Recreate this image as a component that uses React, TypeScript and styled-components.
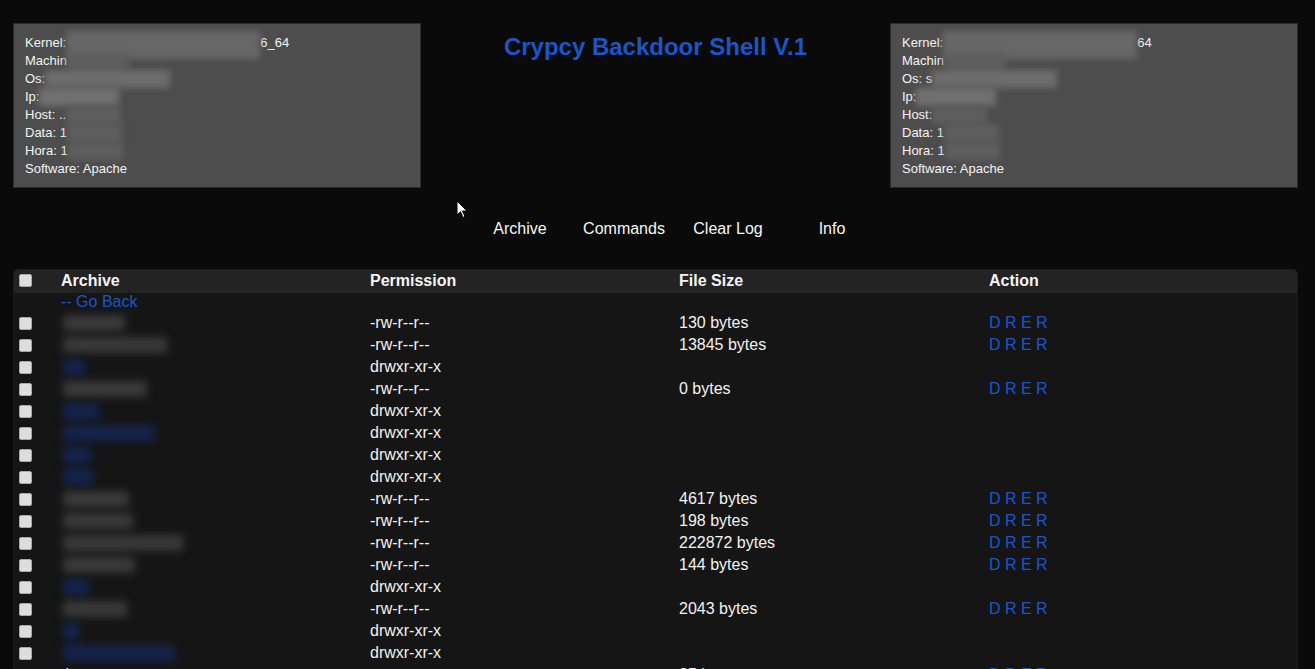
import React from 'react';
import styled, { createGlobalStyle } from 'styled-components';

const GlobalStyle = createGlobalStyle`
  html, body {
    margin: 0;
    padding: 0;
    background: #0a0a0a;
    font-family: "Liberation Sans", Arial, sans-serif;
    color: #f2f2f2;
    overflow: hidden;
  }
`;

interface Row {
  kind: 'file' | 'dir' | 'plain';
  w?: number;
  name?: string;
  perm: string;
  size?: string;
}

const rows: Row[] = [
  { kind: 'file', w: 62, perm: '-rw-r--r--', size: '130 bytes' },
  { kind: 'file', w: 104, perm: '-rw-r--r--', size: '13845 bytes' },
  { kind: 'dir', w: 22, perm: 'drwxr-xr-x' },
  { kind: 'file', w: 84, perm: '-rw-r--r--', size: '0 bytes' },
  { kind: 'dir', w: 36, perm: 'drwxr-xr-x' },
  { kind: 'dir', w: 92, perm: 'drwxr-xr-x' },
  { kind: 'dir', w: 28, perm: 'drwxr-xr-x' },
  { kind: 'dir', w: 30, perm: 'drwxr-xr-x' },
  { kind: 'file', w: 66, perm: '-rw-r--r--', size: '4617 bytes' },
  { kind: 'file', w: 70, perm: '-rw-r--r--', size: '198 bytes' },
  { kind: 'file', w: 120, perm: '-rw-r--r--', size: '222872 bytes' },
  { kind: 'file', w: 72, perm: '-rw-r--r--', size: '144 bytes' },
  { kind: 'dir', w: 26, perm: 'drwxr-xr-x' },
  { kind: 'file', w: 64, perm: '-rw-r--r--', size: '2043 bytes' },
  { kind: 'dir', w: 16, perm: 'drwxr-xr-x' },
  { kind: 'dir', w: 112, perm: 'drwxr-xr-x' },
  { kind: 'plain', name: '.htaccess', perm: '-rw-r--r--', size: '25 bytes' },
];

const InfoBox: React.FC<{ variant: 'left' | 'right' }> = ({ variant }) => (
  <Info>
    <Line>Kernel: <Redact $w={194} $h={28} $top $tone="#676767" />{variant === 'left' ? '6_64' : '64'}</Line>
    <Line>Machin<Redact $w={62} $h={18} /></Line>
    <Line>Os:{variant === 'right' ? ' s' : ''}<Redact $w={125} $h={18} $tone="#6c6c6c" /></Line>
    <Line>Ip:<Redact $w={80} $h={18} $tone="#707070" /></Line>
    <Line>Host:{variant === 'left' ? ' ..' : ''}<Redact $w={55} $h={18} /></Line>
    <Line>Data: 1<Redact $w={55} $h={18} /></Line>
    <Line>Hora: 1<Redact $w={55} $h={18} /></Line>
    <Line>Software: Apache</Line>
  </Info>
);

const Cursor = () => (
  <CursorMark width="12" height="19" viewBox="0 0 12 19">
    <path d="M1 1 L1 15 L4.5 11.8 L7 17.5 L9 16.6 L6.6 11 L11 11 Z" fill="#fff" stroke="#000" strokeWidth="1" />
  </CursorMark>
);

export default function App() {
  return (
    <Page>
      <GlobalStyle />
      <Cursor />
      <Header>
        <InfoBox variant="left" />
        <Title>Crypcy Backdoor Shell V.1</Title>
        <InfoBox variant="right" />
      </Header>

      <Nav>
        <NavItem>Archive</NavItem>
        <NavItem>Commands</NavItem>
        <NavItem>Clear Log</NavItem>
        <NavItem>Info</NavItem>
      </Nav>

      <Table>
        <HeadRow>
          <Cell><Check type="checkbox" /></Cell>
          <Cell>Archive</Cell>
          <Cell>Permission</Cell>
          <Cell>File Size</Cell>
          <Cell>Action</Cell>
        </HeadRow>
        <BackRow>
          <Cell />
          <Cell><BackLink>-- Go Back</BackLink></Cell>
        </BackRow>
        {rows.map((r, i) => (
          <BodyRow key={i}>
            <Cell><Check type="checkbox" /></Cell>
            <Cell>
              {r.kind === 'plain' ? (
                <Plain>{r.name}</Plain>
              ) : (
                <NameBlur $w={r.w || 40} $dir={r.kind === 'dir'} />
              )}
            </Cell>
            <Cell>{r.perm}</Cell>
            <Cell>{r.size}</Cell>
            <Cell>{r.size ? <Actions>D R E R</Actions> : null}</Cell>
          </BodyRow>
        ))}
      </Table>
    </Page>
  );
}

const Page = styled.div`
  position: relative;
  padding: 23px 17px 0 13px;
  height: 669px;
  box-sizing: border-box;
  overflow: hidden;
`;

const CursorMark = styled.svg`
  position: absolute;
  left: 456px;
  top: 200px;
  z-index: 2;
`;

const Header = styled.div`
  display: grid;
  grid-template-columns: 408px 1fr 408px;
  align-items: start;
`;

const Info = styled.div`
  background: #4e4d4e;
  border: 1px solid #2c2c2c;
  padding: 10px 11px 11px;
  height: 165px;
  box-sizing: border-box;
  overflow: hidden;
`;

const Line = styled.div`
  height: 18px;
  font-size: 13px;
  line-height: 18px;
  color: #f4f4f4;
  white-space: nowrap;
  display: flex;
  align-items: center;
`;

const Redact = styled.span<{ $w: number; $h: number; $tone?: string; $top?: boolean }>`
  display: inline-block;
  width: ${p => p.$w}px;
  height: ${p => p.$h}px;
  background: ${p => p.$tone || '#5e5e5e'};
  filter: blur(3px);
  flex-shrink: 0;
  align-self: ${p => (p.$top ? 'flex-start' : 'center')};
  margin-top: ${p => (p.$top ? '-3px' : '0')};
`;

const Title = styled.h1`
  margin: 10px 0 0;
  text-align: center;
  font-size: 24px;
  line-height: 28px;
  font-weight: bold;
  color: #1b55c9;
`;

const Nav = styled.div`
  display: flex;
  justify-content: center;
  padding-left: 41px;
  margin-top: 32px;
`;

const NavItem = styled.div`
  width: 104px;
  text-align: center;
  font-size: 16px;
  line-height: 18px;
  color: #f6f6f6;
`;

const Table = styled.div`
  margin-top: 31px;
  background: #151515;
  border: 1px solid #1c1c1c;
  border-radius: 5px 5px 0 0;
  overflow: hidden;
`;

const RowBase = styled.div`
  display: grid;
  grid-template-columns: 47px 309px 309px 310px 1fr;
  align-items: center;
  font-size: 16px;
`;

const HeadRow = styled(RowBase)`
  height: 23px;
  padding-bottom: 2px;
  box-sizing: border-box;
  background: #232323;
  font-weight: bold;
  color: #f4f4f4;
`;

const BackRow = styled(RowBase)`
  height: 19px;
  align-items: start;
`;

const BodyRow = styled(RowBase)`
  height: 22px;
  color: #f2f2f2;
`;

const Cell = styled.div`
  display: flex;
  align-items: center;
  white-space: nowrap;
  line-height: 18px;
`;

const Check = styled.input`
  appearance: none;
  width: 13px;
  height: 13px;
  margin: 0 0 0 5px;
  background: #dedede;
  border: 1px solid #a8a8a8;
  border-radius: 2px;
  box-sizing: border-box;
`;

const BackLink = styled.span`
  color: #1b55c9;
`;

const NameBlur = styled.span<{ $w: number; $dir: boolean }>`
  display: inline-block;
  width: ${p => p.$w}px;
  height: 16px;
  margin-left: 2px;
  background: ${p => (p.$dir ? '#15244e' : '#3a3a3a')};
  filter: blur(4px);
`;

const Plain = styled.span`
  color: #f2f2f2;
`;

const Actions = styled.span`
  color: #1b55c9;
  font-size: 16px;
`;
